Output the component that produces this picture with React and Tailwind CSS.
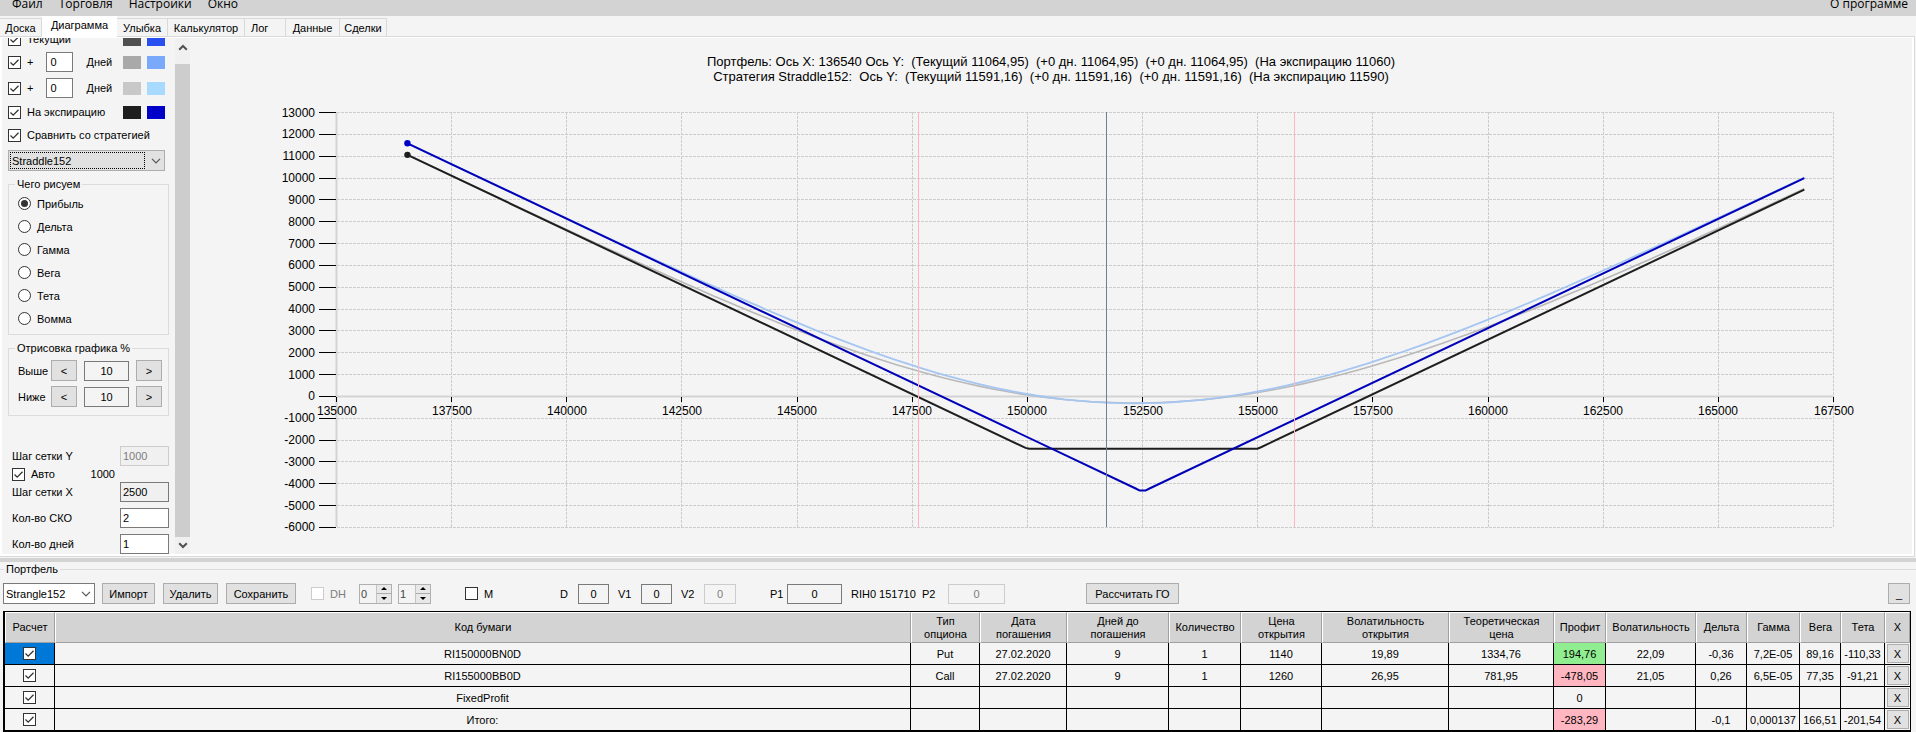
import React, { useState } from 'react';
import clsx from 'clsx';

const TABS = [
    { name: 'Доска', width: 'w-[42px] text-center' },
    { name: 'Диаграмма', width: 'w-[75px] text-center' },
    { name: 'Улыбка', width: 'w-[51px] text-center' },
    { name: 'Калькулятор', width: 'w-[77px] text-center' },
    { name: 'Лог', width: 'w-[41px] pl-[6px] text-left' },
    { name: 'Данные', width: 'w-[54px] text-center' },
    { name: 'Сделки', width: 'w-[47px] text-center' },
];

const MODES = ['Прибыль', 'Дельта', 'Гамма', 'Вега', 'Тета', 'Вомма'];

const COLUMNS = [
    { title: 'Расчет', width: 'w-[50px]' },
    { title: 'Код бумаги', width: '' },
    { title: 'Тип\nопциона', width: 'w-[69px]' },
    { title: 'Дата\nпогашения', width: 'w-[87px]' },
    { title: 'Дней до\nпогашения', width: 'w-[102px]' },
    { title: 'Количество', width: 'w-[72px]' },
    { title: 'Цена\nоткрытия', width: 'w-[81px]' },
    { title: 'Волатильность\nоткрытия', width: 'w-[127px]' },
    { title: 'Теоретическая\nцена', width: 'w-[105px]' },
    { title: 'Профит', width: 'w-[52px]' },
    { title: 'Волатильность', width: 'w-[90px]' },
    { title: 'Дельта', width: 'w-[51px]' },
    { title: 'Гамма', width: 'w-[53px]' },
    { title: 'Вега', width: 'w-[41px]' },
    { title: 'Тета', width: 'w-[44px]' },
    { title: 'X', width: 'w-[25px]' },
];

const PROFIT_COL = 8;

const ROWS = [
    ['RI150000BN0D', 'Put', '27.02.2020', '9', '1', '1140', '19,89', '1334,76', '194,76', '22,09', '-0,36', '7,2E-05', '89,16', '-110,33'],
    ['RI155000BB0D', 'Call', '27.02.2020', '9', '1', '1260', '26,95', '781,95', '-478,05', '21,05', '0,26', '6,5E-05', '77,35', '-91,21'],
    ['FixedProfit', '', '', '', '', '', '', '', '0', '', '', '', '', ''],
    ['Итого:', '', '', '', '', '', '', '', '-283,29', '', '-0,1', '0,000137', '166,51', '-201,54'],
];

// ---- small controls ----

const Check = ({ label, checked = false, disabled = false, id, hideLabel = false }) => (
    <label htmlFor={id} className={clsx('flex items-center gap-[6px]', disabled && 'text-[#7d7d7d]')}>
        <span className="grid size-[13px] shrink-0">
            <input
                id={id}
                type="checkbox"
                defaultChecked={checked}
                disabled={disabled}
                aria-label={hideLabel ? label : undefined}
                className="peer col-start-1 row-start-1 size-[13px] appearance-none border border-[#333] bg-white disabled:border-[#ccc]"
            />
            <svg viewBox="0 0 13 13" className="pointer-events-none invisible col-start-1 row-start-1 size-[13px] peer-checked:visible">
                <path d="M2.5 6.5 L5.2 9.2 L10.5 3.8" fill="none" stroke="#333" strokeWidth="1.3" />
            </svg>
        </span>
        {!hideLabel && <span>{label}</span>}
    </label>
);

const Box = ({ label, value, className }) => (
    <input
        aria-label={label}
        defaultValue={value}
        className={clsx('h-5 border border-[#7a7a7a]', className)}
    />
);

const Button = ({ children, className }) => (
    <button className={clsx('h-[21px] shrink-0 border border-[#adadad] bg-[#e1e1e1]', className)}>{children}</button>
);

const Chevron = ({ className }) => (
    <svg viewBox="0 0 10 6" className={clsx('pointer-events-none h-[6px] w-[10px]', className)}>
        <path d="M1 0.8 L5 4.8 L9 0.8" fill="none" stroke="#555" strokeWidth="1.2" />
    </svg>
);

const ScrollArrow = ({ className }) => (
    <svg viewBox="0 0 10 7" className={clsx('h-[7px] w-[10px]', className)}>
        <path d="M1.2 1.2 L5 5 L8.8 1.2" fill="none" stroke="#505050" strokeWidth="2" />
    </svg>
);

const Swatches = ({ gray, blue }) => (
    <span className="ml-auto flex gap-[6px]">
        <span className={clsx('h-[13px] w-[18px]', gray)} />
        <span className={clsx('h-[13px] w-[18px]', blue)} />
    </span>
);

const Spinner = ({ label, value }) => (
    <span className="flex h-5 w-[33px] items-center border border-[#b0b0b0]">
        <input aria-label={label} defaultValue={value} className="w-4 min-w-0 pl-px text-[#444]" />
        <span className="flex h-full w-[15px] flex-col border-l border-[#c4c4c4] bg-[#e8e8e8]">
            <button aria-label="Больше" className="flex flex-1 items-center justify-center border-b border-[#adadad]">
                <svg viewBox="0 0 6 3" className="h-[3px] w-[6px]"><path d="M0 3 L3 0 L6 3 Z" /></svg>
            </button>
            <button aria-label="Меньше" className="flex flex-1 items-center justify-center">
                <svg viewBox="0 0 6 3" className="h-[3px] w-[6px]"><path d="M0 0 L3 3 L6 0 Z" /></svg>
            </button>
        </span>
    </span>
);

// ---- left panel ----

const DaysRow = ({ id, gray, blue }) => (
    <div className="flex h-[26px] shrink-0 items-center pr-1">
        <Check id={id} label="+" checked />
        <Box label="Дней" value="0" className="ml-[13px] w-[27px] bg-white pl-[3px]" />
        <span className="ml-[13px]">Дней</span>
        <Swatches gray={gray} blue={blue} />
    </div>
);

const PercentRow = ({ label }) => (
    <div className="flex items-center">
        <span className="w-[33px] shrink-0">{label}</span>
        <Button className="w-[26px]">&lt;</Button>
        <Box label={label} value="10" className="ml-[7px] w-[45px] text-center" />
        <Button className="ml-[7px] w-[26px]">&gt;</Button>
    </div>
);

const Field = ({ id, label, value, disabled, className }) => (
    <div className="flex h-5 items-center justify-between pl-1">
        <label htmlFor={id}>{label}</label>
        <input
            id={id}
            defaultValue={value}
            disabled={disabled}
            className={clsx('h-5 w-[49px] border border-[#7a7a7a] pl-[2px] disabled:border-[#ccc] disabled:text-[#7d7d7d]', className)}
        />
    </div>
);

const Sidebar = () => {
    const [mode, setMode] = useState('Прибыль');

    return (
        <div className="flex w-[188px] shrink-0">
            <div className="flex min-w-0 flex-1 flex-col justify-end overflow-hidden px-[6px]">
                <div className="flex h-5 shrink-0 items-center pr-1">
                    <Check id="current" label="Текущий" checked />
                    <Swatches gray="bg-[#505050]" blue="bg-[#2850f0]" />
                </div>
                <DaysRow id="plus-first" gray="bg-[#a9a9a9]" blue="bg-[#7aa8fa]" />
                <DaysRow id="plus-second" gray="bg-[#c8c8c8]" blue="bg-[#a8daff]" />
                <div className="flex h-[22px] shrink-0 items-center pr-1">
                    <Check id="expiry" label="На экспирацию" checked />
                    <Swatches gray="bg-[#1e1e1e]" blue="bg-[#0000c8]" />
                </div>
                <div className="flex h-6 shrink-0 items-center">
                    <Check id="compare" label="Сравнить со стратегией" checked />
                </div>

                <div className="relative mt-[3px] mr-1 h-[21px] shrink-0">
                    <select aria-label="Стратегия" className="h-full w-full appearance-none border border-[#adadad] bg-[#e1e1e1] pl-[3px]">
                        <option>Straddle152</option>
                    </select>
                    <span className="pointer-events-none absolute inset-y-[2px] right-[20px] left-[2px] border border-dotted border-black" />
                    <Chevron className="absolute top-[8px] right-[4px]" />
                </div>

                <fieldset className="mt-[5px] min-w-0 shrink-0 border border-[#dcdcdc] px-[9px] pb-1">
                    <legend className="-ml-[3px] px-[2px] leading-4">Чего рисуем</legend>
                    {MODES.map((name) => (
                        <label key={name} className="flex h-[23px] items-center gap-[6px]">
                            <input
                                type="radio"
                                name="mode"
                                checked={mode === name}
                                onChange={() => setMode(name)}
                                className="grid size-[13px] appearance-none place-content-center rounded-full border border-[#333] bg-white before:size-[7px] before:rounded-full checked:before:bg-[#333]"
                            />
                            {name}
                        </label>
                    ))}
                </fieldset>

                <fieldset className="mt-[5px] flex h-[76px] min-w-0 shrink-0 flex-col border border-[#dcdcdc] pr-[6px] pl-[9px]">
                    <legend className="-ml-[3px] px-[2px] leading-4">Отрисовка графика %</legend>
                    <div className="flex flex-col gap-[5px] pt-1">
                        <PercentRow label="Выше" />
                        <PercentRow label="Ниже" />
                    </div>
                </fieldset>

                <div className="mt-[30px] shrink-0">
                    <Field id="step-y" label="Шаг сетки Y" value="1000" disabled className="bg-[#f0f0f0]" />
                    <div className="flex h-4 items-center pl-1">
                        <Check id="auto" label="Авто" checked />
                        <span className="ml-auto pr-[54px]">1000</span>
                    </div>
                    <Field id="step-x" label="Шаг сетки X" value="2500" className="bg-[#f0f0f0]" />
                </div>
                <div className="mt-[6px] flex shrink-0 flex-col gap-[6px]">
                    <Field id="sko" label="Кол-во СКО" value="2" className="bg-white" />
                    <Field id="days" label="Кол-во дней" value="1" className="bg-white" />
                </div>
            </div>

            {/* scroll bar */}
            <div className="flex w-[15px] flex-col items-center bg-[#f0f0f0]">
                <span className="flex h-[26px] items-start pt-[6px]"><ScrollArrow className="rotate-180" /></span>
                <span className="w-full flex-1 bg-[#cdcdcd]" />
                <span className="flex h-[17px] items-center"><ScrollArrow /></span>
            </div>
        </div>
    );
};

// ---- chart ----

const sx = (price) => 336.5 + (price - 135000) * 0.046062;
const sy = (value) => 112.5 + (13000 - value) * 0.021835;
const snap = (n) => Math.floor(n) + 0.5;

// logistic fit of the normal cdf is close enough for a screen
const density = (d) => Math.exp((-d * d) / 2) / Math.sqrt(2 * Math.PI);
const cdf = (d) => 1 / (1 + Math.exp(-1.5976 * d - 0.07056 * d * d * d));

const optionValue = (moneyness, sigma) => {
    const d = moneyness / sigma;
    return sigma * (density(d) + d * cdf(d));
};

const FIRST = 136540;
const LAST = 166866;

const curve = (putStrike, callStrike, premium, vol) => {
    const points = [];
    for (let i = 0; i <= 100; i++) {
        const price = FIRST + ((LAST - FIRST) * i) / 100;
        const sigma = price * vol;
        const profit = optionValue(putStrike - price, sigma) + optionValue(price - callStrike, sigma) - premium;
        points.push(`${sx(price).toFixed(1)},${sy(profit).toFixed(1)}`);
    }
    return points.join(' ');
};

const line = (pairs) => pairs.map(([price, value]) => `${sx(price)},${sy(value)}`).join(' ');

const portfolioLine = line([[FIRST, 11060], [149960, -2360], [150040, -2400], [154990, -2400], [155070, -2330], [LAST, 9466]]);
const strategyLine = line([[FIRST, 11590], [152350, -4220], [152430, -4310], [152570, -4310], [152650, -4220], [LAST, 9996]]);

const X_TICKS = Array.from({ length: 14 }, (_, i) => 135000 + i * 2500);
const Y_TICKS = Array.from({ length: 20 }, (_, i) => 13000 - i * 1000);

const Chart = () => (
    <div className="flex min-w-0 flex-1 flex-col">
        <div className="pt-4 text-center text-[13px] leading-[15px] whitespace-pre">
            <p>Портфель: Ось X: 136540 Ось Y:  (Текущий 11064,95)  (+0 дн. 11064,95)  (+0 дн. 11064,95)  (На экспирацию 11060)</p>
            <p>Стратегия Straddle152:  Ось Y:  (Текущий 11591,16)  (+0 дн. 11591,16)  (+0 дн. 11591,16)  (На экспирацию 11590)</p>
        </div>
        <svg viewBox="190 84 1722 470" className="min-h-0 w-full flex-1 text-[12px]">
            <g stroke="#cdcdcd" strokeDasharray="3 1">
                {Y_TICKS.map((v) => (
                    <line key={v} x1="337" x2="1833" y1={snap(sy(v))} y2={snap(sy(v))} />
                ))}
                {X_TICKS.map((v) => (
                    <line key={v} x1={snap(sx(v))} x2={snap(sx(v))} y1="112" y2="527" />
                ))}
            </g>
            <line x1="336.5" x2="336.5" y1="112" y2="527" stroke="#d3d3d3" strokeWidth="2" />
            <line x1="336" x2="1834" y1="396.5" y2="396.5" stroke="#d3d3d3" strokeWidth="2" />

            <g stroke="#000">
                {Y_TICKS.map((v) => (
                    <line key={v} x1="319" x2="336" y1={snap(sy(v))} y2={snap(sy(v))} />
                ))}
                {X_TICKS.map((v) => (
                    <line key={v} x1={snap(sx(v))} x2={snap(sx(v))} y1="397" y2="402" />
                ))}
            </g>
            <g textAnchor="end">
                {Y_TICKS.map((v) => (
                    <text key={v} x="315" y={Math.round(sy(v)) + 4}>{v}</text>
                ))}
            </g>
            <g textAnchor="middle">
                {X_TICKS.map((v) => (
                    <text key={v} x={Math.round(sx(v))} y="415">{v}</text>
                ))}
            </g>

            <g fill="none" strokeLinejoin="round">
                <polyline points={curve(150000, 155000, 2400, 0.0339)} stroke="#b9b9b9" strokeWidth="1.6" />
                <polyline points={curve(152500, 152500, 4370, 0.0333)} stroke="#a6c6f2" strokeWidth="1.8" />
                <polyline points={portfolioLine} stroke="#1e1e1e" strokeWidth="2" />
                <polyline points={strategyLine} stroke="#0000b8" strokeWidth="2" />
            </g>
            <circle cx={sx(FIRST)} cy={sy(11590)} r="3.2" fill="#0000c8" />
            <circle cx={sx(FIRST)} cy={sy(11060)} r="3.2" fill="#1e1e1e" />

            <line x1="918.5" x2="918.5" y1="112" y2="527" stroke="#ffb6c1" />
            <line x1="1294.5" x2="1294.5" y1="112" y2="527" stroke="#ffb6c1" />
            <line x1="1106.5" x2="1106.5" y1="112" y2="527" stroke="#708090" />
        </svg>
    </div>
);

// ---- portfolio ----

const Toolbar = () => (
    <div className="flex h-[35px] items-center pr-[6px] pl-[3px]">
        <div className="relative h-[21px] w-[92px]">
            <select aria-label="Портфель" className="h-full w-full appearance-none border border-[#7a7a7a] bg-white pl-[2px]">
                <option>Strangle152</option>
            </select>
            <Chevron className="absolute top-[8px] right-[4px]" />
        </div>
        <Button className="ml-[7px] w-[53px]">Импорт</Button>
        <Button className="ml-2 w-[55px]">Удалить</Button>
        <Button className="ml-2 w-[70px]">Сохранить</Button>
        <div className="ml-[15px] w-12"><Check id="dh" label="DH" disabled /></div>
        <Spinner label="DH от" value="0" />
        <span className="w-[6px]" />
        <Spinner label="DH до" value="1" />
        <div className="ml-[34px] w-[95px]"><Check id="m" label="M" /></div>
        <label htmlFor="d" className="w-[18px]">D</label>
        <input id="d" defaultValue="0" className="h-5 w-[31px] border border-[#7a7a7a] text-center" />
        <label htmlFor="v1" className="ml-[9px] w-[23px]">V1</label>
        <input id="v1" defaultValue="0" className="h-5 w-[31px] border border-[#7a7a7a] text-center" />
        <label htmlFor="v2" className="ml-[9px] w-[23px]">V2</label>
        <input id="v2" defaultValue="0" disabled className="h-5 w-[32px] border border-[#ccc] text-center text-[#7d7d7d]" />
        <label htmlFor="p1" className="ml-[34px] w-[17px]">P1</label>
        <input id="p1" defaultValue="0" className="h-5 w-[55px] border border-[#7a7a7a] text-center" />
        <span className="ml-[9px] w-[71px] whitespace-nowrap">RIH0 151710</span>
        <label htmlFor="p2" className="w-[26px]">P2</label>
        <input id="p2" defaultValue="0" disabled className="h-5 w-[57px] border border-[#ccc] text-center text-[#7d7d7d]" />
        <Button className="ml-[81px] w-[93px]">Рассчитать ГО</Button>
        <Button className="ml-auto w-[22px]">_</Button>
    </div>
);

const PortfolioTable = () => (
    <table className="w-full table-fixed border-separate border-spacing-0 text-center">
        <thead>
            <tr className="h-[31px] bg-[#d3d3d3]">
                {COLUMNS.map(({ title, width }) => (
                    <th key={title} className={clsx('border border-t-white border-r-[#a0a0a0] border-b-[#a0a0a0] border-l-white p-0 leading-[13px] font-normal whitespace-pre-line', width)}>
                        {title}
                    </th>
                ))}
            </tr>
        </thead>
        <tbody>
            {ROWS.map((row, r) => (
                <tr key={row[0]} className="h-[22px] *:border-b *:border-black *:p-0">
                    <td className={clsx('border-r', r === 0 && 'bg-[#0078d7]')}>
                        <span className="flex justify-center">
                            <Check id={`row-${r}`} label={row[0]} checked hideLabel />
                        </span>
                    </td>
                    {row.map((cell, i) => (
                        <td
                            key={i}
                            className={clsx(
                                'border-r leading-4 whitespace-nowrap',
                                i === PROFIT_COL && cell.startsWith('-') && 'bg-[#ffb6c1]',
                                i === PROFIT_COL && parseFloat(cell) > 0 && 'bg-[#90ee90]',
                            )}
                        >
                            {cell}
                        </td>
                    ))}
                    <td>
                        <button className="mx-auto block h-[19px] w-[22px] border border-[#adadad] bg-[#e1e1e1]">X</button>
                    </td>
                </tr>
            ))}
        </tbody>
    </table>
);

const App = () => {
    const [tab, setTab] = useState('Диаграмма');

    return (
        <div className="flex h-screen min-w-[1300px] flex-col overflow-hidden bg-[#f4f4f4] font-['Liberation_Sans',Arial,sans-serif] text-[11px] leading-4 text-black">
            <nav className="flex h-4 shrink-0 items-end gap-4 bg-[#d3d3d3] pr-2 pb-1 pl-3 font-['Open_Sans','Noto_Sans',sans-serif] text-[12px]">
                <button>Файл</button>
                <button>Торговля</button>
                <button>Настройки</button>
                <button>Окно</button>
                <button className="ml-auto">О программе</button>
            </nav>

            <div className="flex h-5 shrink-0 items-end">
                {TABS.map(({ name, width }) => (
                    <button
                        key={name}
                        onClick={() => setTab(name)}
                        className={clsx(
                            'whitespace-nowrap',
                            width,
                            tab === name
                                ? 'relative -mb-px h-[21px] bg-white pb-[3px]'
                                : 'h-[18px] border-t border-r border-[#d9d9d9]',
                        )}
                    >
                        {name}
                    </button>
                ))}
            </div>

            <main className="mr-px flex min-h-0 flex-1 border-t border-r border-b border-[#d9d9d9]">
                <div className="flex min-w-0 flex-1 border-2 border-t border-white">
                    <Sidebar />
                    <Chart />
                </div>
            </main>

            <div className="mt-px h-1 shrink-0 bg-[#d3d3d3]" />

            <fieldset className="min-w-0 shrink-0 border-t border-[#dcdcdc]">
                <legend className="ml-1 px-[2px] leading-[14px]">Портфель</legend>
                <Toolbar />
                <div className="mr-[5px] ml-[3px] border-t border-r border-b border-l-2 border-black">
                    <PortfolioTable />
                </div>
            </fieldset>
        </div>
    );
};

export default App;
